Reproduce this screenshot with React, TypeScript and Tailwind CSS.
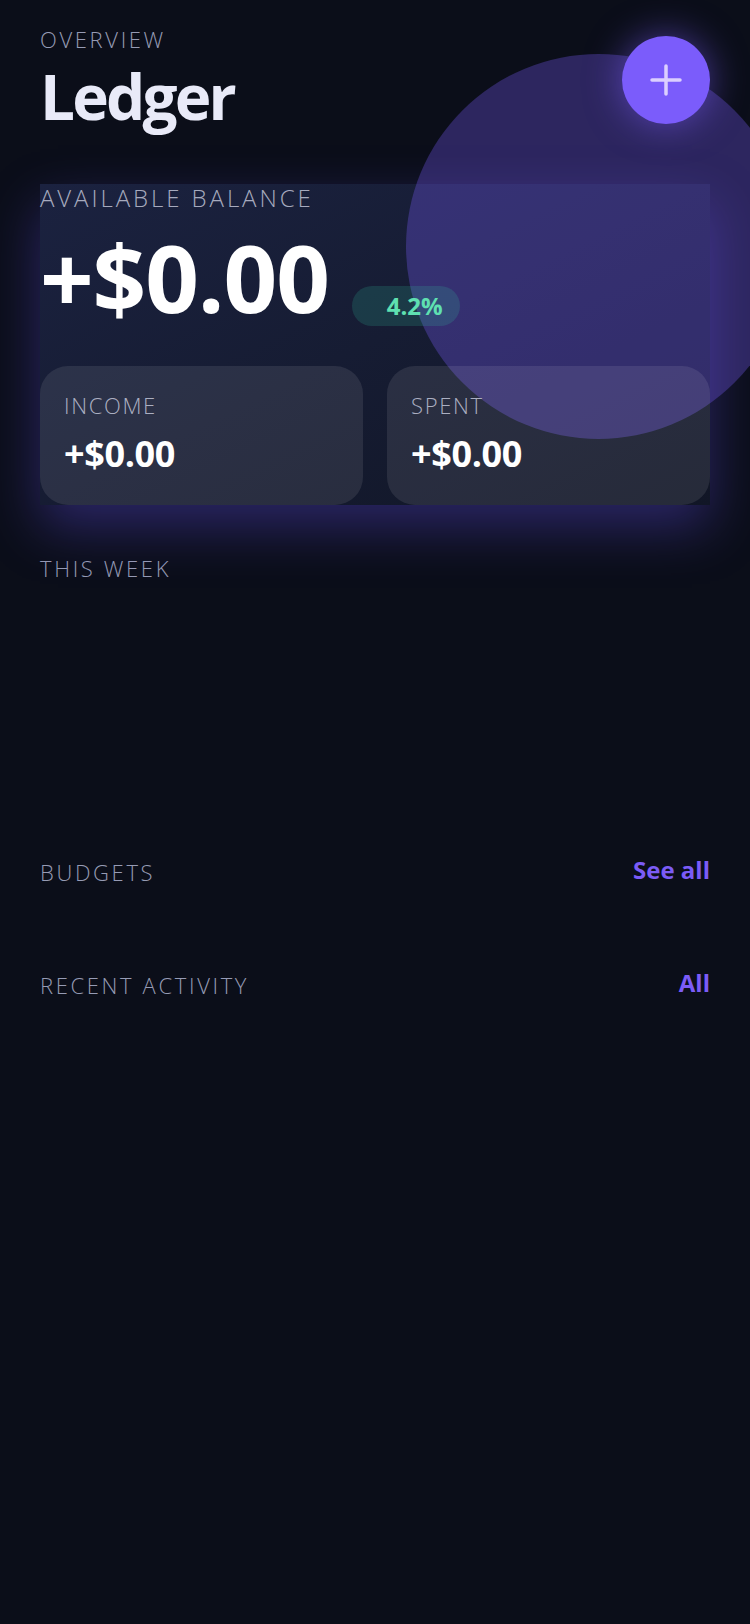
import React from "react";

function Label({ children }: { children: React.ReactNode }) {
  return (
    <div className="text-[22px] leading-[30px] tracking-[0.12em] font-light text-[#969bb4] uppercase">
      {children}
    </div>
  );
}

function StatCard({ label, value }: { label: string; value: string }) {
  return (
    <div className="relative z-20 rounded-[28px] bg-white/[0.09] pl-[24px] pt-[24px] pb-[27px]">
      <div className="text-[22px] leading-[30px] tracking-[0.075em] font-light text-[#abafc1]">{label}</div>
      <div className="mt-[10px] text-[36px] leading-[48px] font-bold text-white tracking-[-0.01em]">{value}</div>
    </div>
  );
}

export default function App() {
  return (
    <div className="relative min-h-[1624px] w-[750px] overflow-hidden bg-[#0b0e19] font-['Open_Sans',sans-serif]">
      {/* decorative circle */}
      <div className="pointer-events-none absolute left-[406px] top-[54px] z-10 h-[385px] w-[385px] rounded-full bg-[rgba(124,92,252,0.31)]" />

      <div className="px-[40px] pt-[24px]">
        {/* header */}
        <div className="flex items-start justify-between">
          <div>
            <Label>Overview</Label>
            <div className="mt-[2px] text-[62px] leading-[80px] font-bold tracking-[-0.045em] text-[#e9eaf8]">
              Ledger
            </div>
          </div>
          <button className="relative z-30 mt-[12px] flex h-[88px] w-[88px] items-center justify-center rounded-full bg-[#7b5cfb] shadow-[0_0_36px_rgba(124,92,252,0.55)]">
            <svg width="32" height="32" viewBox="0 0 32 32" fill="none">
              <path d="M16 2v28M2 16h28" stroke="#dccfff" strokeWidth="3.5" strokeLinecap="round" />
            </svg>
          </button>
        </div>

        {/* balance card */}
        <div className="relative mt-[48px] bg-gradient-to-br from-[#1b2240] to-[#111626] shadow-[0_22px_50px_rgba(95,75,225,0.38)]">
          <div className="relative z-20 text-[24px] leading-[28px] tracking-[0.122em] font-light text-[#a6aabe]">
            AVAILABLE BALANCE
          </div>
          <div className="relative z-20 mt-[10px] flex items-end">
            <div className="text-[94px] leading-[110px] font-bold tracking-[-0.012em] text-white">+$0.00</div>
            <div className="mb-[6px] ml-[23px] flex h-[40px] items-center rounded-full bg-[rgba(52,200,160,0.18)] pl-[35px] pr-[17px] text-[24px] font-bold text-[#5fe0b1]">
              4.2%
            </div>
          </div>
          <div className="mt-[34px] grid grid-cols-2 gap-[24px]">
            <StatCard label="INCOME" value="+$0.00" />
            <StatCard label="SPENT" value="+$0.00" />
          </div>
        </div>

        {/* this week */}
        <div className="mt-[48px]">
          <Label>This week</Label>
        </div>
        <div className="h-[272px]" />

        {/* budgets */}
        <div className="flex items-start justify-between">
          <div className="mt-[2px]">
            <Label>Budgets</Label>
          </div>
          <span className="text-[24px] leading-[30px] font-bold text-[#7b5cf6]">See all</span>
        </div>

        <div className="mt-[81px] flex items-start justify-between">
          <div className="mt-[2px]">
            <Label>Recent activity</Label>
          </div>
          <span className="text-[24px] leading-[30px] font-bold text-[#7b5cf6]">All</span>
        </div>
      </div>
    </div>
  );
}
